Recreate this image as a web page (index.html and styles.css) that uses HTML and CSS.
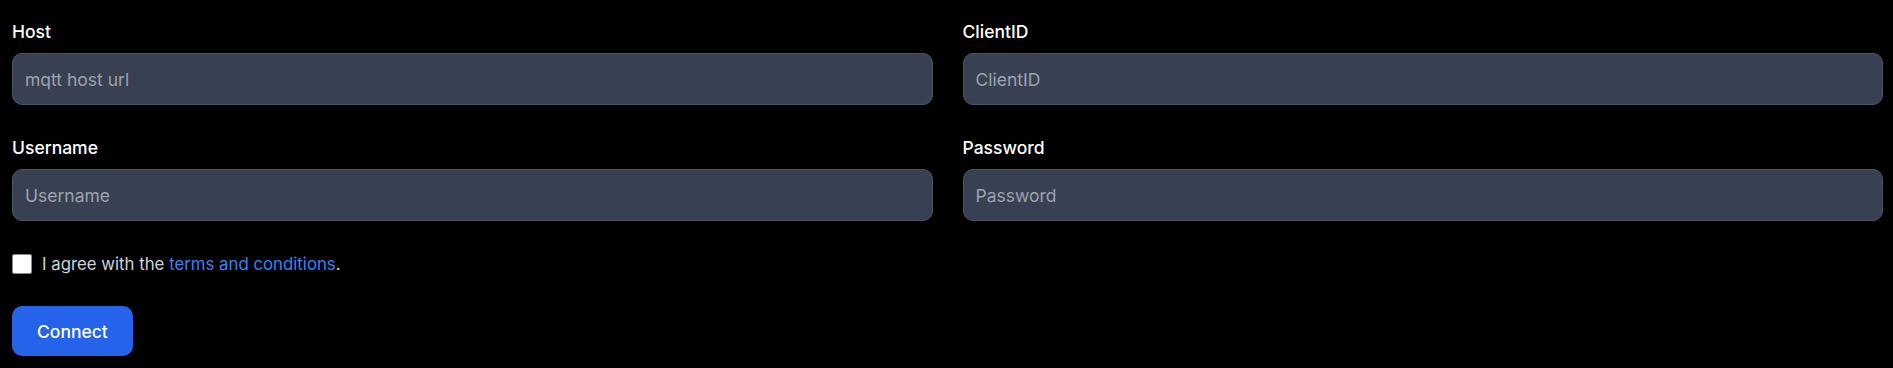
FILE: index.html
```html
<!DOCTYPE html>
<html lang="en">
<head>
  <meta charset="UTF-8" />
  <meta name="viewport" content="width=device-width, initial-scale=1.0"/>
  <title>MQTT Connect</title>
  <link rel="stylesheet" href="styles.css">
</head>

<body>

  <!-- CONNECTION FORM -->
  <form class="connect-form">
    <div class="field-grid">
      <div class="field">
        <label for="host">Host</label>
        <input type="text" id="host" placeholder="mqtt host url">
      </div>
      <div class="field">
        <label for="clientid">ClientID</label>
        <input type="text" id="clientid" placeholder="ClientID">
      </div>
    </div>

    <div class="field-grid">
      <div class="field">
        <label for="username">Username</label>
        <input type="text" id="username" placeholder="Username">
      </div>
      <div class="field">
        <label for="password">Password</label>
        <input type="password" id="password" placeholder="Password">
      </div>
    </div>

    <!-- TERMS -->
    <div class="terms">
      <div class="terms-box">
        <input type="checkbox" id="agree">
      </div>
      <label for="agree">I agree with the <a href="#">terms and conditions</a>.</label>
    </div>

    <button type="submit" class="connect-btn">Connect</button>
  </form>

</body>
</html>
```

FILE: styles.css
```css
body {
  margin: 0;
  background-color: #000;
  font-family: Inter, "Noto Sans", sans-serif;
}

/* FORM WRAPPER */
.connect-form {
  padding: 19px 10px 0 12px;
}

/* TWO COLUMN ROWS */
.field-grid {
  display: grid;
  grid-template-columns: 1fr 1fr;
  gap: 30px;
  margin-bottom: 30px;
}

.field label {
  display: block;
  margin-bottom: 9px;
  font-size: 17.5px;
  line-height: 25px;
  font-weight: 500;
  color: #fff;
}

.field input {
  display: block;
  box-sizing: border-box;
  width: 100%;
  height: 52px;
  padding: 0 12px;
  font-family: inherit;
  font-size: 17.5px;
  color: #fff;
  background-color: #374151;
  border: 1px solid #4b5563;
  border-radius: 10px; /* ROUNDED-LG */
  outline: none;
}

.field input::placeholder {
  color: #9ca3af;
}

/* CHECKBOX ROW */
.terms {
  display: flex;
  align-items: flex-start;
  margin-bottom: 29px;
}

.terms-box {
  display: flex;
  align-items: center;
  height: 26px;
}

.terms-box input {
  appearance: none;
  box-sizing: border-box;
  width: 20px;
  height: 20px;
  margin: 0;
  background-color: #fff;
  border: 1px solid #8a8a8a;
  border-radius: 2px;
}

.terms label {
  margin-left: 10px;
  font-size: 16.8px;
  line-height: 26px;
  font-weight: 400;
  color: #d1d5db;
}

.terms a {
  color: #3b82f6;
  text-decoration: none;
}

/* SUBMIT */
.connect-btn {
  height: 50px;
  padding: 0 25px;
  font-family: inherit;
  font-size: 17.5px;
  font-weight: 500;
  color: #fff;
  background-color: #2563eb;
  border: none;
  border-radius: 10px;
  cursor: pointer;
}
```
